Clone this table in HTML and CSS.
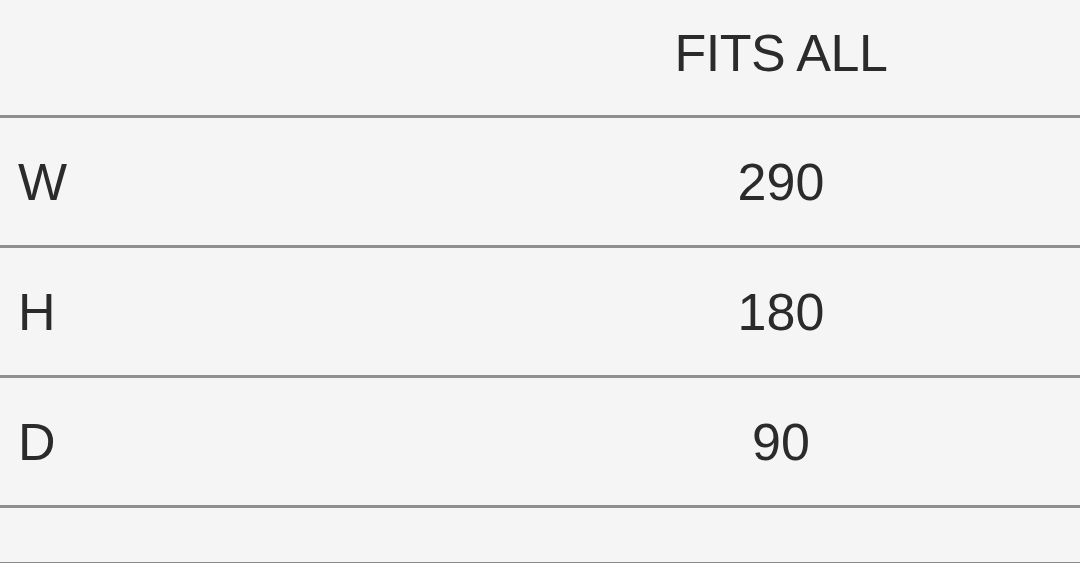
FILE: index.html
```html
<!DOCTYPE html>
<html lang="en">
<head>
<meta charset="utf-8">
<title>Size chart</title>
<link rel="stylesheet" href="styles.css">
</head>
<body>
<div class="size-table">
  <div class="row header">
    <div class="label"></div>
    <div class="value">FITS ALL</div>
  </div>
  <div class="row">
    <div class="label">W</div>
    <div class="value">290</div>
  </div>
  <div class="row">
    <div class="label">H</div>
    <div class="value">180</div>
  </div>
  <div class="row">
    <div class="label">D</div>
    <div class="value">90</div>
  </div>
  <div class="row empty">
    <div class="label"></div>
    <div class="value"></div>
  </div>
</div>
</body>
</html>
```

FILE: styles.css
```css
html, body {
  margin: 0;
  padding: 0;
  background: #f5f5f5;
}

body {
  font-family: "Liberation Sans", Arial, sans-serif;
  color: #2b2b2b;
  overflow: hidden;
}

.size-table {
  width: 1080px;
  display: flex;
  flex-direction: column;
}

.row {
  display: grid;
  grid-template-columns: 482px 1fr;
  align-items: center;
  height: 127px;
  border-bottom: 3px solid #8f8f8f;
  font-size: 52px;
  line-height: 60px;
}

.row.header {
  box-sizing: border-box;
  height: 118px;
  padding-bottom: 10px;
  letter-spacing: -0.5px;
}

.row.empty {
  height: 54px;
  border-bottom: 2px solid #8a8a8a;
}

.label {
  padding-left: 18px;
}

.value {
  text-align: center;
}
```
